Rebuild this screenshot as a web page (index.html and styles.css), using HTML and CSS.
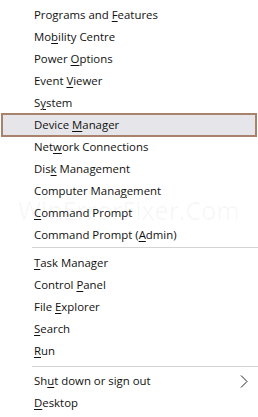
FILE: index.html
```html
<!DOCTYPE html>
<html>
<head>
<meta charset="utf-8">
<link rel="stylesheet" href="styles.css">
</head>
<body>
<div class="menu">
  <div class="watermark">WinErrorFixer.Com</div>
  <div class="item"><span>Programs and <u>F</u>eatures</span></div>
  <div class="item"><span>Mo<u>b</u>ility Centre</span></div>
  <div class="item"><span>Power <u>O</u>ptions</span></div>
  <div class="item"><span>Event <u>V</u>iewer</span></div>
  <div class="item"><span>S<u>y</u>stem</span></div>
  <div class="item selected"><span>Device <u>M</u>anager</span></div>
  <div class="item"><span>Net<u>w</u>ork Connections</span></div>
  <div class="item"><span>Dis<u>k</u> Management</span></div>
  <div class="item"><span>Computer Mana<u>g</u>ement</span></div>
  <div class="item"><span><u>C</u>ommand Prompt</span></div>
  <div class="item"><span>Command Prompt (<u>A</u>dmin)</span></div>
  <div class="sep"></div>
  <div class="item"><span><u>T</u>ask Manager</span></div>
  <div class="item"><span>Control <u>P</u>anel</span></div>
  <div class="item"><span>File <u>E</u>xplorer</span></div>
  <div class="item"><span><u>S</u>earch</span></div>
  <div class="item"><span><u>R</u>un</span></div>
  <div class="sep sep2"></div>
  <div class="item has-sub"><span>Sh<u>u</u>t down or sign out</span>
    <svg class="chev" width="8" height="13" viewBox="0 0 8 13"><polyline points="1,0.5 7,6.5 1,12.5" fill="none" stroke="#222" stroke-width="1"/></svg>
  </div>
  <div class="item"><span><u>D</u>esktop</span></div>
</div>
</body>
</html>
```
FILE: styles.css
```css
html, body {
  margin: 0;
  padding: 0;
  background: #fff;
}
.menu {
  position: relative;
  width: 258px;
  height: 417px;
  padding-top: 4px;
  box-sizing: border-box;
  font-family: "Open Sans", "Noto Sans", sans-serif;
  font-size: 11.4px;
  color: #111;
}
.watermark {
  position: absolute;
  left: 18px;
  top: 193px;
  font-size: 25px;
  color: rgba(0, 0, 0, 0.045);
  white-space: nowrap;
  pointer-events: none;
}
.item {
  position: relative;
  height: 22px;
  line-height: 22px;
  padding-left: 34px;
  padding-right: 10px;
  display: flex;
  align-items: center;
  justify-content: space-between;
  white-space: nowrap;
}
.item u {
  text-decoration-thickness: 1px;
  text-underline-offset: 2px;
}
.selected {
  margin: -1px 1px;
  padding-left: 31px;
  height: 20px;
  border: 2px solid #a8826c;
  background: #e6e6ea;
}
.sep {
  height: 1px;
  background: #d4d4d4;
  margin: 1px 0 4px 32px;
}
.sep2 {
  margin: 4px 0 3px 32px;
}
.chev {
  display: block;
}
```
